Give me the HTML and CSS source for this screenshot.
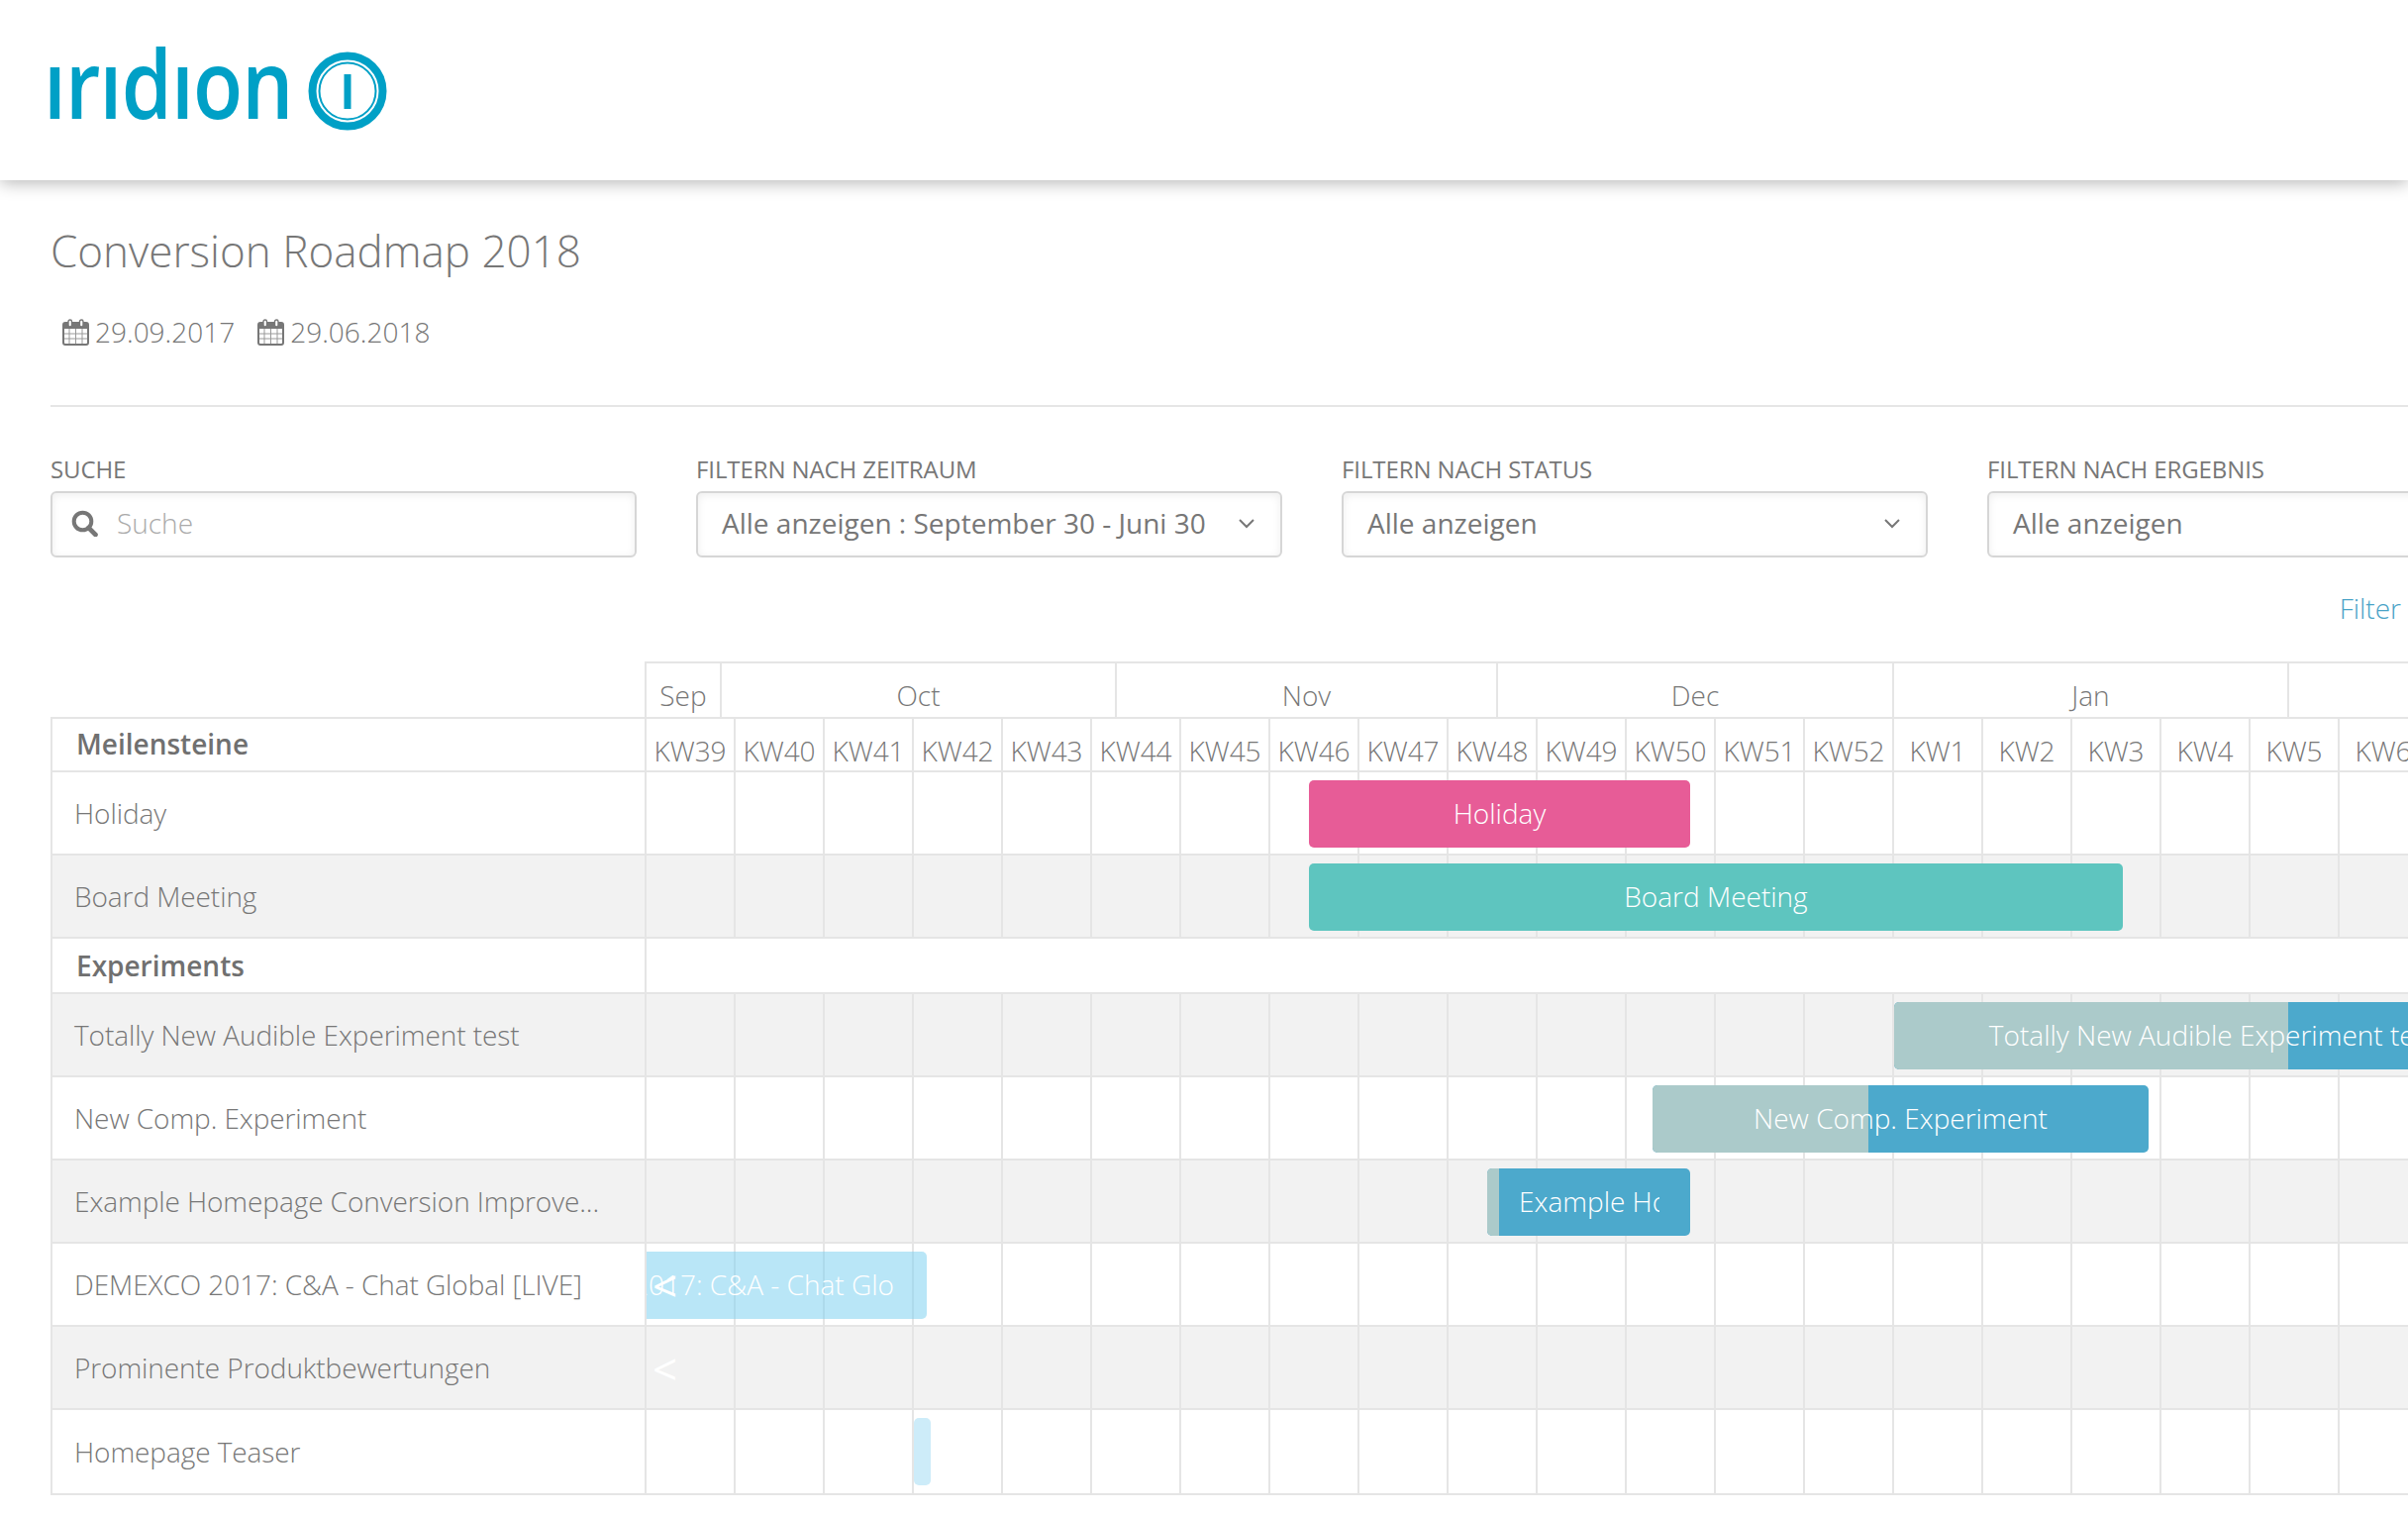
FILE: index.html
```html
<!DOCTYPE html>
<html lang="de">
<head>
<meta charset="utf-8">
<title>Conversion Roadmap 2018</title>
<link rel="stylesheet" href="styles.css">
</head>
<body>
<header class="topbar">
  <div class="logo">
    <span class="logo-word">ırıdıon</span>
    <svg class="logo-mark" width="80" height="80" viewBox="0 0 80 80"><circle cx="40" cy="40" r="35.5" fill="none" stroke="#00a0c6" stroke-width="8"/><circle cx="40" cy="40" r="28.5" fill="none" stroke="#00a0c6" stroke-width="2"/><rect x="36.5" y="23" width="7" height="35" fill="#00a0c6"/></svg>
  </div>
</header>
<main class="page">
  <h1 class="title">Conversion Roadmap 2018</h1>
  <div class="dates">
    <span class="date"><svg class="cal" width="27" height="27" viewBox="0 0 27 27"><rect x="1" y="4" width="25" height="22" rx="2" fill="none" stroke="#777" stroke-width="2"/><rect x="1" y="4" width="25" height="6" fill="#777"/><rect x="6" y="1" width="3.5" height="7" rx="1.7" fill="#fff" stroke="#777" stroke-width="1.4"/><rect x="17.5" y="1" width="3.5" height="7" rx="1.7" fill="#fff" stroke="#777" stroke-width="1.4"/><path d="M7 10v15M13.5 10v15M20 10v15M2 15h23M2 20h23" stroke="#999" stroke-width="1"/></svg>29.09.2017</span>
    <span class="date"><svg class="cal" width="27" height="27" viewBox="0 0 27 27"><rect x="1" y="4" width="25" height="22" rx="2" fill="none" stroke="#777" stroke-width="2"/><rect x="1" y="4" width="25" height="6" fill="#777"/><rect x="6" y="1" width="3.5" height="7" rx="1.7" fill="#fff" stroke="#777" stroke-width="1.4"/><rect x="17.5" y="1" width="3.5" height="7" rx="1.7" fill="#fff" stroke="#777" stroke-width="1.4"/><path d="M7 10v15M13.5 10v15M20 10v15M2 15h23M2 20h23" stroke="#999" stroke-width="1"/></svg>29.06.2018</span>
  </div>
  <hr class="divider">
  <section class="filters">
    <div class="filter">
      <div class="filter-label">Suche</div>
      <div class="control">
        <svg class="search-icon" width="27" height="27" viewBox="0 0 27 27"><circle cx="11.5" cy="11.5" r="8.8" fill="none" stroke="#777" stroke-width="4"/><path d="M17.5 18l7 7" stroke="#777" stroke-width="4.6" stroke-linecap="round"/></svg>
        <span class="placeholder">Suche</span>
      </div>
    </div>
    <div class="filter">
      <div class="filter-label">Filtern nach Zeitraum</div>
      <div class="control select"><span>Alle anzeigen : September 30 - Juni 30</span><svg class="chev" width="18" height="11" viewBox="0 0 18 11"><path d="M2 2l7 7 7-7" fill="none" stroke="#777" stroke-width="2"/></svg></div>
    </div>
    <div class="filter">
      <div class="filter-label">Filtern nach Status</div>
      <div class="control select"><span>Alle anzeigen</span><svg class="chev" width="18" height="11" viewBox="0 0 18 11"><path d="M2 2l7 7 7-7" fill="none" stroke="#777" stroke-width="2"/></svg></div>
    </div>
    <div class="filter">
      <div class="filter-label">Filtern nach Ergebnis</div>
      <div class="control select"><span>Alle anzeigen</span></div>
    </div>
  </section>
  <div class="filter-link-row"><a class="filter-link">Filter</a></div>

  <section class="gantt">
    <div class="months">
      <div class="month" style="width:76px">Sep</div>
      <div class="month" style="width:399px">Oct</div>
      <div class="month" style="width:385px">Nov</div>
      <div class="month" style="width:400px">Dec</div>
      <div class="month" style="width:399px">Jan</div>
      <div class="month" style="width:361px"></div>
    </div>
    <div class="row head">
      <div class="name strong">Meilensteine</div>
      <div class="weeks">
        <span>KW39</span><span>KW40</span><span>KW41</span><span>KW42</span><span>KW43</span><span>KW44</span><span>KW45</span><span>KW46</span><span>KW47</span><span>KW48</span><span>KW49</span><span>KW50</span><span>KW51</span><span>KW52</span><span>KW1</span><span>KW2</span><span>KW3</span><span>KW4</span><span>KW5</span><span>KW6</span>
      </div>
    </div>
    <div class="row">
      <div class="name">Holiday</div>
      <div class="track"><div class="bar pink" style="left:669px;width:385px"><span class="bar-label">Holiday</span></div></div>
    </div>
    <div class="row alt">
      <div class="name">Board Meeting</div>
      <div class="track"><div class="bar teal" style="left:669px;width:822px"><span class="bar-label">Board Meeting</span></div></div>
    </div>
    <div class="row section">
      <div class="name strong">Experiments</div>
      <div class="blank"></div>
    </div>
    <div class="row alt">
      <div class="name">Totally New Audible Experiment test</div>
      <div class="track"><div class="bar blue" style="left:1260px;width:644px"><i class="progress" style="width:398px"></i><span class="bar-label">Totally New Audible Experiment test</span></div></div>
    </div>
    <div class="row">
      <div class="name">New Comp. Experiment</div>
      <div class="track"><div class="bar blue" style="left:1016px;width:501px"><i class="progress" style="width:218px"></i><span class="bar-label">New Comp. Experiment</span></div></div>
    </div>
    <div class="row alt">
      <div class="name">Example Homepage Conversion Improve...</div>
      <div class="track"><div class="bar blue" style="left:849px;width:205px"><i class="progress" style="width:12px"></i><span class="bar-label clipped">Example Homepage Conversion Improvement</span></div></div>
    </div>
    <div class="row">
      <div class="name">DEMEXCO 2017: C&amp;A - Chat Global [LIVE]</div>
      <div class="track"><div class="bar sky" style="left:0;width:283px"><span class="bar-label shifted">DEMEXCO 2017: C&amp;A - Chat Global [LIVE]</span></div><span class="marker">&lt;</span></div>
    </div>
    <div class="row alt">
      <div class="name">Prominente Produktbewertungen</div>
      <div class="track"><span class="marker">&lt;</span></div>
    </div>
    <div class="row last">
      <div class="name">Homepage Teaser</div>
      <div class="track"><div class="bar pale" style="left:270px;width:17px"></div></div>
    </div>
  </section>
</main>
</body>
</html>
```
FILE: styles.css
```css
* { box-sizing: border-box; }
html, body { margin: 0; height: 1530px; width: 2432px; overflow: hidden; background: #fff; }
body { font-family: "Open Sans", "Liberation Sans", sans-serif; color: #777; font-size: 28px; }

.topbar { position: relative; z-index: 2; height: 182px; background: #fff; box-shadow: 0 3px 16px rgba(0,0,0,.28); padding: 28px 0 0 44px; }
.logo { display: flex; align-items: flex-start; height: 110px; }
.logo-word { color: #00a0c6; font-size: 96px; font-weight: 600; line-height: 110px; letter-spacing: -1px; transform: scaleX(.855); transform-origin: 0 50%; margin-right: -48px; }
.logo-mark { flex: none; margin: 24px 0 0 21px; }

.page { padding-left: 51px; height: 1348px; overflow: hidden; }
.title { margin: 41px 0 0; font-size: 44px; line-height: 60px; font-weight: 300; color: #777; }
.dates { display: flex; gap: 23px; margin: 32px 0 0 12px; height: 40px; }
.date { display: flex; align-items: center; font-weight: 300; font-size: 28px; line-height: 40px; white-space: nowrap; }
.cal { margin-right: 6px; flex: none; }
.divider { margin: 54px 0 0; border: 0; border-top: 2px solid #e6e6e6; }

.filters { display: flex; gap: 60px; margin-top: 48px; width: 2700px; }
.filter { width: 592px; flex: none; }
.filter-label { font-size: 24px; line-height: 30px; text-transform: uppercase; letter-spacing: -.1px; margin-bottom: 7px; }
.control { height: 67px; border: 2px solid #d6d6d6; border-radius: 6px; box-shadow: inset 0 2px 8px rgba(0,0,0,.07); display: flex; align-items: center; padding: 0 24px 4px; font-size: 28px; white-space: nowrap; }
.select { justify-content: space-between; }
.chev { flex: none; margin-right: 1px; margin-top: 2px; }
.search-icon { flex: none; margin: 2px 19px 0 -5px; }
.placeholder { color: #aaa; font-weight: 300; }

.filter-link-row { display: flex; justify-content: flex-end; padding-right: 7px; margin: 32px 0 0 -51px; line-height: 38px; }
.filter-link { color: #4aa3c7; font-weight: 300; }

.gantt { margin-top: 35px; width: 2700px; }
.months { display: flex; margin-left: 600px; height: 56px; border-top: 2px solid #e5e5e5; border-left: 2px solid #e5e5e5; }
.month { flex: none; border-right: 2px solid #e5e5e5; text-align: center; padding-top: 12px; line-height: 40px; font-weight: 300; font-size: 28px; }

.row { display: flex; height: 84px; border-bottom: 2px solid #e5e5e5; border-left: 2px solid #e5e5e5; }
.row.alt { background: #f2f2f2; }
.row.head { height: 56px; border-top: 2px solid #e5e5e5; }
.row.section { height: 56px; }
.row.last { height: 86px; }
.name { flex: none; width: 600px; padding-left: 22px; display: flex; align-items: center; font-weight: 300; font-size: 28px; letter-spacing: -.08px; white-space: nowrap; border-right: 2px solid #e5e5e5; }
.name.strong { font-weight: 600; padding-left: 24px; color: #707070; letter-spacing: 0; }
.row.head .name { padding-bottom: 2px; }

.weeks { display: grid; grid-template-columns: repeat(20, 90px); flex: none; }
.weeks span { border-right: 2px solid #e5e5e5; text-align: center; padding-top: 12px; line-height: 40px; font-size: 28px; font-weight: 300; white-space: nowrap; }
.blank { flex: 1; }

.track { position: relative; flex: 1; background-image: repeating-linear-gradient(90deg, transparent 0, transparent 88px, #e5e5e5 88px, #e5e5e5 90px); }

.bar { position: absolute; top: 8px; height: 68px; border-radius: 5px; overflow: hidden; display: flex; align-items: center; color: #fff; font-size: 28px; padding-bottom: 2px; }
.pink { background: #e75c97; }
.teal { background: #5ec5bf; }
.blue { background: #4ca9cc; }
.sky { background: rgba(120, 207, 240, .52); border-radius: 0 5px 5px 0; }
.pale { background: rgba(150, 216, 243, .48); }
.progress { position: absolute; left: 0; top: 0; bottom: 0; background: #abcaca; }
.bar-label { position: relative; flex: 1; min-width: 0; text-align: center; white-space: nowrap; overflow: hidden; font-weight: 300; }
.bar-label.clipped { text-align: left; margin: 0 31px 0 32px; }
.bar-label.shifted { text-align: left; margin-right: 32px; text-indent: -150px; }
.marker { position: absolute; left: 6px; top: 18px; color: #fff; font-size: 44px; line-height: 48px; font-weight: 400; }
```
